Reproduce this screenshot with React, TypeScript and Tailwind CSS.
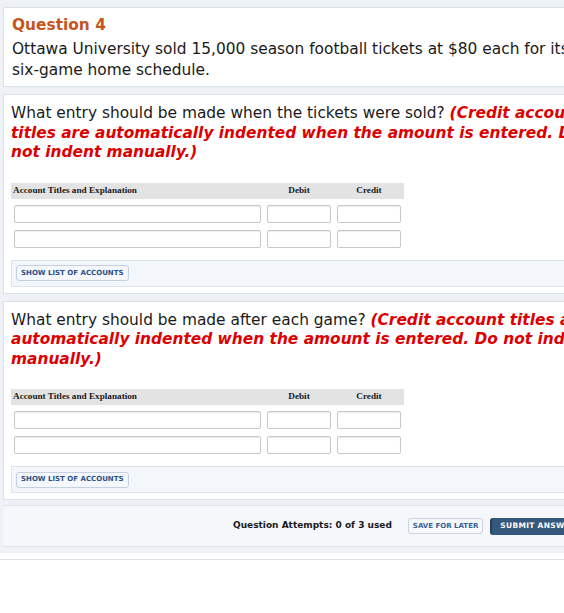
const font = { fontFamily: '"DejaVu Sans", Verdana, sans-serif' }

function Entry() {
  return (
    <div className="mt-[20px]">
      <table className="w-[393px] border-collapse" style={{ fontFamily: '"Liberation Serif", "Times New Roman", serif' }}>
        <thead>
          <tr className="bg-[#e3e3e3] h-[16px] text-[9.2px] font-bold text-[#1a1a1a]">
            <th className="w-[253px] text-left pl-[2px] font-bold">Account Titles and Explanation</th>
            <th className="w-[70px] text-center font-bold">Debit</th>
            <th className="w-[70px] text-center font-bold">Credit</th>
          </tr>
        </thead>
        <tbody>
          {[0, 1].map((i) => (
            <tr key={i}>
              <td className="pt-[6px] pb-[1px] px-[3px]">
                <div className="h-[18px] border border-[#c8c8c8] rounded-[2px] bg-white shadow-[inset_0_1px_1px_rgba(0,0,0,0.08)]" />
              </td>
              <td className="pt-[6px] pb-[1px] px-[3px]">
                <div className="h-[18px] border border-[#c8c8c8] rounded-[2px] bg-white shadow-[inset_0_1px_1px_rgba(0,0,0,0.08)]" />
              </td>
              <td className="pt-[6px] pb-[1px] px-[3px]">
                <div className="h-[18px] border border-[#c8c8c8] rounded-[2px] bg-white shadow-[inset_0_1px_1px_rgba(0,0,0,0.08)]" />
              </td>
            </tr>
          ))}
        </tbody>
      </table>
      <div className="mt-[11px] h-[27px] flex items-center pl-[4px] bg-[#f3f6fa] border border-[#dde3ea] border-r-0">
        <button className="h-[16px] px-[4px] text-[7px] font-bold text-[#2c5286] bg-[#f4f7fb] border border-[#c5d1e0] rounded-[3px]">
          SHOW LIST OF ACCOUNTS
        </button>
      </div>
    </div>
  )
}

function Red({ children }: { children: React.ReactNode }) {
  return <span className="text-[#dc0000] font-bold italic">{children}</span>
}

export default function App() {
  return (
    <div className="w-[564px] h-[613px] overflow-hidden bg-white" style={font}>
      <div className="w-[660px] bg-[#eef2f7] pt-[7px] pl-[3px] pb-[6px]">
        {/* Question header */}
        <div className="bg-white border border-[#dbe1e9] border-r-0 px-[8px] pt-[7px] pb-[5px]">
          <div className="text-[15.4px] leading-[21px] font-bold text-[#c5561b]">Question 4</div>
          <div className="mt-[3px] text-[15.4px] leading-[21px] text-[#1a1a1a] whitespace-nowrap">
            Ottawa University sold 15,000 season football tickets at $80 each for its
            <br />
            six-game home schedule.
          </div>
        </div>

        {/* Part 1 */}
        <div className="mt-[7px] bg-white border border-[#dbe1e9] border-r-0 px-[7px] pt-[9px] pb-[6px]">
          <div className="text-[15.4px] leading-[19.5px] text-[#1a1a1a] whitespace-nowrap">
            What entry should be made when the tickets were sold? <Red>(Credit account</Red>
            <br />
            <Red>titles are automatically indented when the amount is entered. Do</Red>
            <br />
            <Red>not indent manually.)</Red>
          </div>
          <Entry />
        </div>

        {/* Part 2 */}
        <div className="mt-[7px] bg-white border border-[#dbe1e9] border-r-0 px-[7px] pt-[9px] pb-[6px]">
          <div className="text-[15.4px] leading-[19.5px] text-[#1a1a1a] whitespace-nowrap">
            What entry should be made after each game? <Red>(Credit account titles are</Red>
            <br />
            <Red>automatically indented when the amount is entered. Do not indent</Red>
            <br />
            <Red>manually.)</Red>
          </div>
          <Entry />
        </div>

        {/* Footer */}
        <div className="mt-[5px] h-[42px] flex items-center bg-[#f5f7fb] border-y border-[#dde3ea] pl-[230px]">
          <span className="text-[9px] font-bold text-[#1a1a1a]">Question Attempts: 0 of 3 used</span>
          <button className="ml-[16px] h-[16px] px-[4px] text-[7px] font-bold text-[#3a6193] bg-[#f6f8fb] border border-[#c9d3e0] rounded-[3px]">
            SAVE FOR LATER
          </button>
          <button className="ml-[7px] h-[17px] px-[8px] text-[7.5px] font-bold tracking-[0.3px] text-white bg-[#35587c] border-l-2 border-[#24405e] rounded-[3px]">
            SUBMIT ANSWER
          </button>
        </div>
      </div>
      <div className="mt-[6px] border-t border-[#dfe3e8] h-[60px] bg-white" />
    </div>
  )
}
